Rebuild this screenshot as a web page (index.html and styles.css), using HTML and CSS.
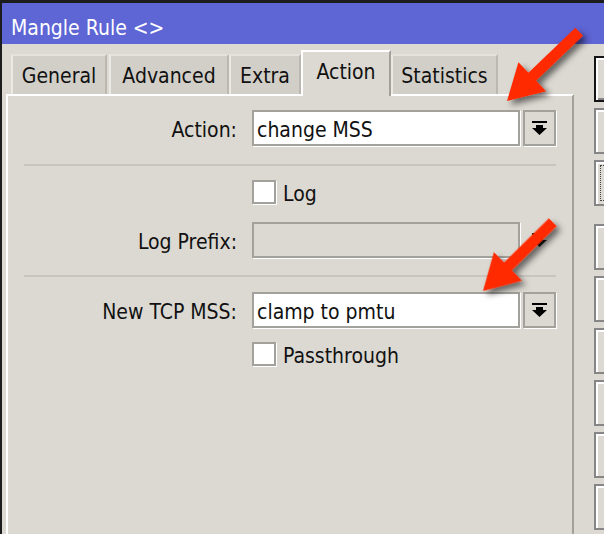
FILE: index.html
```html
<!DOCTYPE html>
<html>
<head>
<meta charset="utf-8">
<title>Mangle Rule</title>
<link rel="stylesheet" href="styles.css">
</head>
<body>
<div class="window">
  <div class="titlebar">Mangle Rule &lt;&gt;</div>
  <div class="body">
    <div class="main">
      <div class="tabs">
        <div class="tab tab-general">General</div>
        <div class="tab tab-advanced">Advanced</div>
        <div class="tab tab-extra">Extra</div>
        <div class="tab tab-action active">Action</div>
        <div class="tab tab-stats">Statistics</div>
      </div>
      <div class="panel">
        <div class="row row-first">
          <div class="lbl">Action:</div>
          <div class="input">change MSS</div>
          <div class="dd"><svg width="15" height="14" viewBox="0 0 15 14"><rect x="0" y="0" width="15" height="2"/><path d="M4 4h7v3h4l-7.5 7L0 7h4z"/></svg></div>
        </div>
        <div class="sep"></div>
        <div class="check-row check-log">
          <span class="box"></span><span class="check-text">Log</span>
        </div>
        <div class="row row-prefix">
          <div class="lbl">Log Prefix:</div>
          <div class="input disabled"></div>
          <div class="dd dd-disabled"><svg width="15" height="14" viewBox="0 0 15 14"><rect x="0" y="0" width="15" height="2"/><path d="M4 4h7v3h4l-7.5 7L0 7h4z"/></svg></div>
        </div>
        <div class="sep sep-second"></div>
        <div class="row row-mss">
          <div class="lbl">New TCP MSS:</div>
          <div class="input">clamp to pmtu</div>
          <div class="dd"><svg width="15" height="14" viewBox="0 0 15 14"><rect x="0" y="0" width="15" height="2"/><path d="M4 4h7v3h4l-7.5 7L0 7h4z"/></svg></div>
        </div>
        <div class="check-row check-pass">
          <span class="box"></span><span class="check-text">Passthrough</span>
        </div>
      </div>
    </div>
    <div class="side">
      <div class="btn btn-default"></div>
      <div class="btn"></div>
      <div class="btn"><span class="focus"></span></div>
      <div class="btn btn-group"></div>
      <div class="btn"></div>
      <div class="btn"></div>
      <div class="btn"></div>
      <div class="btn"></div>
      <div class="btn"></div>
    </div>
  </div>
</div>
<svg class="arrows" width="604" height="534" viewBox="0 0 604 534">
  <defs>
    <filter id="sh" x="-30%" y="-30%" width="160%" height="160%">
      <feDropShadow dx="4" dy="4" stdDeviation="3" flood-color="#000" flood-opacity="0.55"/>
    </filter>
  </defs>
  <g filter="url(#sh)" fill="#ff2a00">
    <polygon transform="translate(507 101) rotate(-43.8)" points="0,0 35,-20 35,-5.5 100,-5.5 100,5.5 35,5.5 35,20"/>
    <polygon transform="translate(483 291) rotate(-44.6)" points="0,0 35,-20 35,-5.5 98,-5.5 98,5.5 35,5.5 35,20"/>
  </g>
</svg>
</body>
</html>
```
FILE: styles.css
```css
* { box-sizing: border-box; }
html, body { margin: 0; padding: 0; }
body {
  width: 604px;
  height: 534px;
  overflow: hidden;
  position: relative;
  background: #dcd9d2;
  font-family: "DejaVu Sans Condensed", "DejaVu Sans", sans-serif;
  font-size: 21px;
  color: #111;
}
.window {
  width: 604px;
  height: 534px;
  border-left: 2px solid #1c1c1c;
  border-top: 3px solid #1c1c1c;
  display: flex;
  flex-direction: column;
  overflow: hidden;
}
.titlebar {
  height: 41px;
  flex: 0 0 41px;
  background: #5e65d4;
  color: #fff;
  padding-left: 9px;
  padding-top: 5px;
  line-height: 40px;
  font-size: 21px;
  white-space: nowrap;
  overflow: hidden;
}
.body { display: flex; flex: 1; min-height: 0; }
.main {
  flex: 0 0 592px;
  padding-left: 4px;
  display: flex;
  flex-direction: column;
}
.tabs {
  height: 50px;
  flex: 0 0 50px;
  display: flex;
  align-items: flex-end;
  padding-left: 5px;
  position: relative;
  z-index: 1;
}
.tab {
  height: 40px;
  display: flex;
  align-items: center;
  justify-content: center;
  background: #d2cfc8;
  border-top: 2px solid #e4e2dd;
  border-left: 2px solid #ebe9e4;
  border-right: 2px solid #bcb8b0;
  white-space: nowrap;
  padding-top: 2px;
}
.tab-general { width: 96px; margin-right: 2px; }
.tab-advanced { width: 120px; }
.tab-extra { width: 72px; }
.tab-action { width: 90px; }
.tab-stats { width: 107px; }
.tab.active {
  height: 46px;
  margin-bottom: -2px;
  background: #dcd9d2;
  border-top: 2px solid #fff;
  border-left: 2px solid #fff;
  border-right: 2px solid #a3a09a;
  padding-top: 0;
  padding-bottom: 4px;
}
.panel {
  width: 568px;
  flex: 1;
  border-top: 2px solid #fff;
  border-left: 2px solid #fff;
  border-right: 2px solid #a3a09a;
  display: flex;
  flex-direction: column;
}
.row {
  display: flex;
  align-items: center;
  height: 36px;
}
.row-first { margin-top: 14px; }
.row-prefix { margin-top: 18px; }
.row-mss { margin-top: 15px; }
.lbl {
  width: 229px;
  margin-right: 15px;
  text-align: right;
  white-space: nowrap;
  padding-top: 4px;
}
.input {
  width: 268px;
  height: 36px;
  background: #fff;
  border: 2px solid #a3a19c;
  box-shadow: 1px 1px 0 #fff;
  padding-left: 3px;
  padding-top: 2px;
  line-height: 32px;
  white-space: nowrap;
}
.input.disabled { background: #dcd9d2; }
.dd {
  width: 33px;
  height: 36px;
  margin-left: 3px;
  border: 2px solid #a3a19c;
  box-shadow: 1px 1px 0 #fff;
  display: flex;
  align-items: center;
  justify-content: center;
}
.dd svg { fill: #000; display: block; }
.dd-disabled { border-color: transparent; box-shadow: none; }
.dd-disabled svg { fill: #222; }
.sep {
  margin-top: 18px;
  margin-left: 16px;
  width: 532px;
  height: 2px;
  background: #c9c5be;
}
.sep-second { margin-top: 17px; }
.check-row {
  display: flex;
  align-items: center;
  height: 24px;
  padding-left: 244px;
  white-space: nowrap;
}
.check-text { padding-top: 4px; }
.check-log { margin-top: 14px; }
.check-pass { margin-top: 14px; }
.box {
  width: 24px;
  height: 24px;
  background: #fff;
  border: 2px solid #a3a19c;
  box-shadow: 1px 1px 0 #fff;
  margin-right: 7px;
}
.side {
  flex: 0 0 10px;
  width: 10px;
  overflow: hidden;
  padding-top: 12px;
  display: flex;
  flex-direction: column;
  gap: 6px;
}
.btn {
  width: 60px;
  height: 46px;
  flex: 0 0 46px;
  border: 2px solid #868686;
  box-shadow: inset 2px 2px 0 #fff;
  background: #dcd9d2;
  padding: 3px 0 0 4px;
}
.btn-default { border-color: #141414; box-shadow: inset 2px 2px 0 #fff, inset -2px -2px 0 #868686; }
.btn-group { margin-top: 12px; }
.focus {
  display: block;
  height: 36px;
  border: 1px dotted #444;
}
.arrows {
  position: absolute;
  top: 0;
  left: 0;
  pointer-events: none;
}
```
